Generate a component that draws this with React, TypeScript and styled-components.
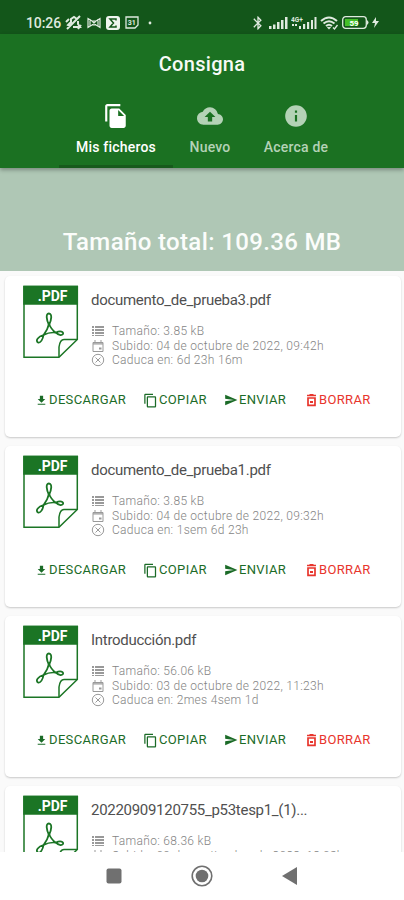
import React from "react";
import styled, { createGlobalStyle } from "styled-components";
import { MdFileCopy, MdCloudUpload, MdInfo, MdFileDownload, MdContentCopy, MdSend, MdBluetooth } from "react-icons/md";

const GlobalStyle = createGlobalStyle`
  * { box-sizing: border-box; }
  body { margin: 0; font-family: Roboto, sans-serif; background: #fafafa; }
`;

const Screen = styled.div`
  width: 404px;
  height: 900px;
  display: flex;
  flex-direction: column;
  overflow: hidden;
  background: #fafafa;
`;

const StatusBar = styled.div`
  height: 34px;
  flex: none;
  display: flex;
  align-items: center;
  justify-content: space-between;
  padding: 11px 25px 0 26px;
  background: #13561a;
  color: #dfeadf;
`;

const StatusGroup = styled.div<{ $gap: number }>`
  display: flex;
  align-items: center;
  gap: ${(p) => p.$gap}px;
  svg { display: block; flex: none; }
`;

const Clock = styled.span`
  font-size: 14px;
  font-weight: 500;
  line-height: 16px;
  letter-spacing: -0.1px;
  width: 34px;
  white-space: nowrap;
`;

const Header = styled.header`
  height: 134px;
  flex: none;
  display: flex;
  flex-direction: column;
  background: #1b7122;
  box-shadow: 0 2px 4px rgba(0, 0, 0, 0.3);
  position: relative;
`;

const Title = styled.h1`
  margin: 0;
  height: 60px;
  line-height: 60px;
  text-align: center;
  font-size: 20px;
  font-weight: 500;
  letter-spacing: 0.3px;
  color: #f6faf6;
`;

const Tabs = styled.nav`
  flex: 1;
  display: flex;
  justify-content: center;
`;

const Tab = styled.div<{ $width: number; $active?: boolean }>`
  width: ${(p) => p.$width}px;
  display: flex;
  flex-direction: column;
  align-items: center;
  padding-top: 9px;
  color: ${(p) => (p.$active ? "#ffffff" : "#b4d2b6")};
  border-bottom: 3px solid ${(p) => (p.$active ? "#175a1c" : "transparent")};
`;

const TabLabel = styled.span`
  margin-top: 9px;
  font-size: 14px;
  font-weight: 500;
  line-height: 19px;
  letter-spacing: 0.2px;
`;

const Summary = styled.div`
  height: 103px;
  flex: none;
  padding-top: 58px;
  background: #afc7b5;
  color: #fbfdfb;
  font-size: 24px;
  font-weight: 500;
  line-height: 32px;
  letter-spacing: 0.36px;
  text-align: center;
`;

const List = styled.main`
  flex: 1;
  min-height: 0;
  overflow: hidden;
  padding: 5px 3px 0 5px;
  display: flex;
  flex-direction: column;
  gap: 9px;
`;

const Card = styled.article`
  height: 161px;
  flex: none;
  background: #ffffff;
  border-radius: 5px;
  box-shadow: 0 1px 2px rgba(0, 0, 0, 0.2);
`;

const CardBody = styled.div`
  display: flex;
  height: 106px;
  padding: 9px 0 0 18px;
  gap: 12px;
`;

const FileInfo = styled.div`
  padding-top: 5px;
`;

const FileName = styled.div`
  height: 34px;
  font-size: 15px;
  line-height: 20px;
  letter-spacing: -0.29px;
  color: #505050;
`;

const Detail = styled.div`
  display: flex;
  align-items: center;
  gap: 7px;
  height: 14.5px;
  font-size: 12px;
  font-weight: 300;
  letter-spacing: 0.31px;
  color: #848484;
  svg { display: block; flex: none; color: #999999; }
`;

const Actions = styled.div`
  display: flex;
  padding-left: 30px;
`;

const Action = styled.button<{ $width: number; $danger?: boolean }>`
  width: ${(p) => p.$width}px;
  height: 36px;
  display: flex;
  align-items: center;
  gap: 1px;
  padding: 0;
  border: 0;
  background: none;
  font: 400 13px/18px Roboto, sans-serif;
  letter-spacing: 0.35px;
  color: ${(p) => (p.$danger ? "#e8352c" : "#1b6b27")};
  svg { display: block; flex: none; }
`;

const NavBar = styled.footer`
  height: 48px;
  flex: none;
  display: flex;
  align-items: center;
  justify-content: center;
  gap: 69px;
  background: #ffffff;
  color: #707070;
`;

const PdfIcon = () => (
  <svg width="56" height="74" viewBox="0 0 56 74" fill="none" stroke="#1b7525" strokeWidth="1.5">
    <path d="M1 1.5H54.3V54.5L36 72.3H1Z" />
    <path d="M1 1.5H54.3V19H1Z" fill="#1b7525" />
    <path d="M36 72V62Q37 54.5 41 54.5H54" />
    <path d="M26 40C23.5 35 22.5 28.5 25.8 28.5C29.5 28.5 28.5 35 26 40ZM20.5 50C20 54 17.5 58.5 15 57.5C12 55.5 15.5 51.5 20.5 50ZM33 47.5C37 45.5 41 46.5 40 49C38.5 51 35.5 50 33 47.5Z" strokeWidth="1.8" />
    <path d="M26 38.5Q25 44 20.5 50Q27 46.8 33 47.8Q28 44.5 26 38.5Z" strokeWidth="1.6" />
    <text x="44.5" y="15.5" textAnchor="end" fill="#fff" stroke="none" fontFamily="Roboto, sans-serif" fontSize="14" fontWeight="700">.PDF</text>
  </svg>
);

const ListIcon = () => (
  <svg width="14" height="14" viewBox="0 0 14 14" fill="currentColor">
    <path d="M1 2h2v2H1zM4 2h9v2H4zM1 5h2v2H1zM4 5h9v2H4zM1 8h2v2H1zM4 8h9v2H4zM1 11h2v1H1zM4 11h9v1H4z" />
  </svg>
);

const CalendarIcon = () => (
  <svg width="14" height="14" viewBox="0 0 14 14" fill="none" stroke="currentColor">
    <path d="M2 3.5h10v9H2zM4 1v3M10 1v3" />
    <path d="M2 4h10M2 5h10" />
    <path d="M8 9.5h2.5" strokeWidth="2" />
  </svg>
);

const ExpireIcon = () => (
  <svg width="14" height="14" viewBox="0 0 14 14" fill="none" stroke="currentColor">
    <circle cx="7" cy="7" r="5.7" />
    <path d="M4.5 4.5l5 5M9.5 4.5l-5 5" />
  </svg>
);

const TrashIcon = () => (
  <svg width="13" height="14" viewBox="0 0 13 14" fill="none" stroke="currentColor">
    <path d="M2 2.5h9M4.5 1.7h4" strokeWidth="1.5" />
    <path d="M3 5h7v7.3H3z" strokeWidth="1.7" />
    <path d="M5 8h3v2H5z" fill="currentColor" stroke="none" />
  </svg>
);

const MutedBell = () => (
  <svg width="17" height="15" viewBox="0 0 17 15" fill="none" stroke="currentColor" strokeWidth="2">
    <path d="M5 11L3 10L6 7V4L9 2L12 4M13 6V9L15 12H8M2 14L15 1M1 7L4 4M13 14L16 10" />
  </svg>
);

const MailIcon = () => (
  <svg width="14" height="12" viewBox="0 0 14 12" fill="none" stroke="currentColor" strokeWidth="1.2">
    <path d="M1 1.5L5 4H9L13 1.5V10.5L9 8H5L1 10.5ZM3 2V10M11 2V10M5 4L9 8M9 4L5 8" />
  </svg>
);

const SigmaIcon = () => (
  <svg width="14" height="14" viewBox="0 0 14 14">
    <rect width="14" height="14" rx="3" fill="#eff5ef" />
    <path d="M10 4.5V3H4L7.5 7L4 11H10V9.5" fill="none" stroke="#13561a" strokeWidth="1.5" />
  </svg>
);

const DateIcon = () => (
  <svg width="14" height="13" viewBox="0 0 14 13">
    <path d="M1 1H13V9L10 12H1Z" fill="none" stroke="currentColor" strokeWidth="1.3" />
    <text x="6.8" y="9" textAnchor="middle" fill="currentColor" fontFamily="Roboto, sans-serif" fontSize="7" fontWeight="700">31</text>
  </svg>
);

const SignalIcon = () => (
  <svg width="19" height="12" viewBox="0 0 19 12" fill="currentColor">
    <path d="M0 9h2.5v3H0zM4 7.5h2.5V12H4zM8 5h2.5v7H8zM12 3h2.5v9H12zM16 0h2.5v12H16z" />
  </svg>
);

const LteSignalIcon = () => (
  <svg width="26" height="13" viewBox="0 0 26 13" fill="currentColor">
    <text x="0" y="5.5" fontFamily="Roboto, sans-serif" fontSize="6.5" fontWeight="700">4G+</text>
    <path d="M1 8h2v2H1zM4 8h2v2H4zM8 10h2v3H8zM12 8h2.2v5H12zM16 6h2.2v7H16zM20 4h2v9H20zM23.5 1h2v12h-2z" />
  </svg>
);

const WifiIcon = () => (
  <svg width="19" height="14" viewBox="0 0 19 14" fill="none" stroke="currentColor" strokeWidth="2">
    <path d="M1 5Q9 -2 17 5M3.5 7.5Q9 3 14.5 7.5M6 10Q9 7.5 12 10" />
    <path d="M7.5 11L9 12.5L10.5 11M13 11.5l1.5 1.5 3-4" strokeWidth="1.3" />
  </svg>
);

const BatteryIcon = () => (
  <svg width="27" height="13" viewBox="0 0 27 13">
    <rect x=".7" y=".7" width="23.6" height="11.6" rx="3" fill="none" stroke="currentColor" strokeWidth="1.3" />
    <path d="M3 3h13v7H3z" fill="#45bf28" />
    <path d="M25 4q3 2.5 0 5" fill="currentColor" />
    <text x="12" y="9.5" textAnchor="middle" fill="#fff" fontFamily="Roboto, sans-serif" fontSize="8" fontWeight="700">59</text>
  </svg>
);

const BoltIcon = () => (
  <svg width="7" height="11" viewBox="0 0 7 11" fill="currentColor">
    <path d="M4 0L0 6h3L2 11l5-7H4z" />
  </svg>
);

const files = [
  { name: "documento_de_prueba3.pdf", size: "3.85 kB", date: "04 de octubre de 2022, 09:42h", expires: "6d 23h 16m" },
  { name: "documento_de_prueba1.pdf", size: "3.85 kB", date: "04 de octubre de 2022, 09:32h", expires: "1sem 6d 23h" },
  { name: "Introducción.pdf", size: "56.06 kB", date: "03 de octubre de 2022, 11:23h", expires: "2mes 4sem 1d" },
  { name: "20220909120755_p53tesp1_(1)...", size: "68.36 kB", date: "09 de septiembre de 2022, 12:08h", expires: "2mes 1sem" },
];

export default function App() {
  return (
    <Screen>
      <GlobalStyle />
      <StatusBar>
        <StatusGroup $gap={5}>
          <Clock>10:26</Clock>
          <MutedBell />
          <MailIcon />
          <SigmaIcon />
          <DateIcon />
          <svg width="16" height="4" viewBox="0 0 16 4"><circle cx="6" cy="2" r="1.4" fill="currentColor" /></svg>
        </StatusGroup>
        <StatusGroup $gap={3}>
          <MdBluetooth size={16} />
          <SignalIcon />
          <LteSignalIcon />
          <WifiIcon />
          <BatteryIcon />
          <BoltIcon />
        </StatusGroup>
      </StatusBar>
      <Header>
        <Title>Consigna</Title>
        <Tabs>
          <Tab $width={114} $active><MdFileCopy size={26} /><TabLabel>Mis ficheros</TabLabel></Tab>
          <Tab $width={74}><MdCloudUpload size={26} /><TabLabel>Nuevo</TabLabel></Tab>
          <Tab $width={98}><MdInfo size={26} /><TabLabel>Acerca de</TabLabel></Tab>
        </Tabs>
      </Header>
      <Summary>Tamaño total: 109.36 MB</Summary>
      <List>
        {files.map((file) => (
          <Card key={file.name}>
            <CardBody>
              <PdfIcon />
              <FileInfo>
                <FileName>{file.name}</FileName>
                <Detail><ListIcon />Tamaño: {file.size}</Detail>
                <Detail><CalendarIcon />Subido: {file.date}</Detail>
                <Detail><ExpireIcon />Caduca en: {file.expires}</Detail>
              </FileInfo>
            </CardBody>
            <Actions>
              <Action $width={108}><MdFileDownload size={13} />DESCARGAR</Action>
              <Action $width={81}><MdContentCopy size={15} />COPIAR</Action>
              <Action $width={81}><MdSend size={14} />ENVIAR</Action>
              <Action $width={70} $danger><TrashIcon />BORRAR</Action>
            </Actions>
          </Card>
        ))}
      </List>
      <NavBar>
        <svg width="16" height="16" viewBox="0 0 16 16"><rect x=".5" y=".5" width="15" height="15" rx="2" fill="currentColor" /></svg>
        <svg width="22" height="22" viewBox="0 0 22 22"><circle cx="11" cy="11" r="9.8" fill="none" stroke="currentColor" strokeWidth="1.6" /><circle cx="11" cy="11" r="6.3" fill="currentColor" /></svg>
        <svg width="16" height="18" viewBox="0 0 16 18"><path d="M15 0V18L0 9Z" fill="currentColor" /></svg>
      </NavBar>
    </Screen>
  );
}
